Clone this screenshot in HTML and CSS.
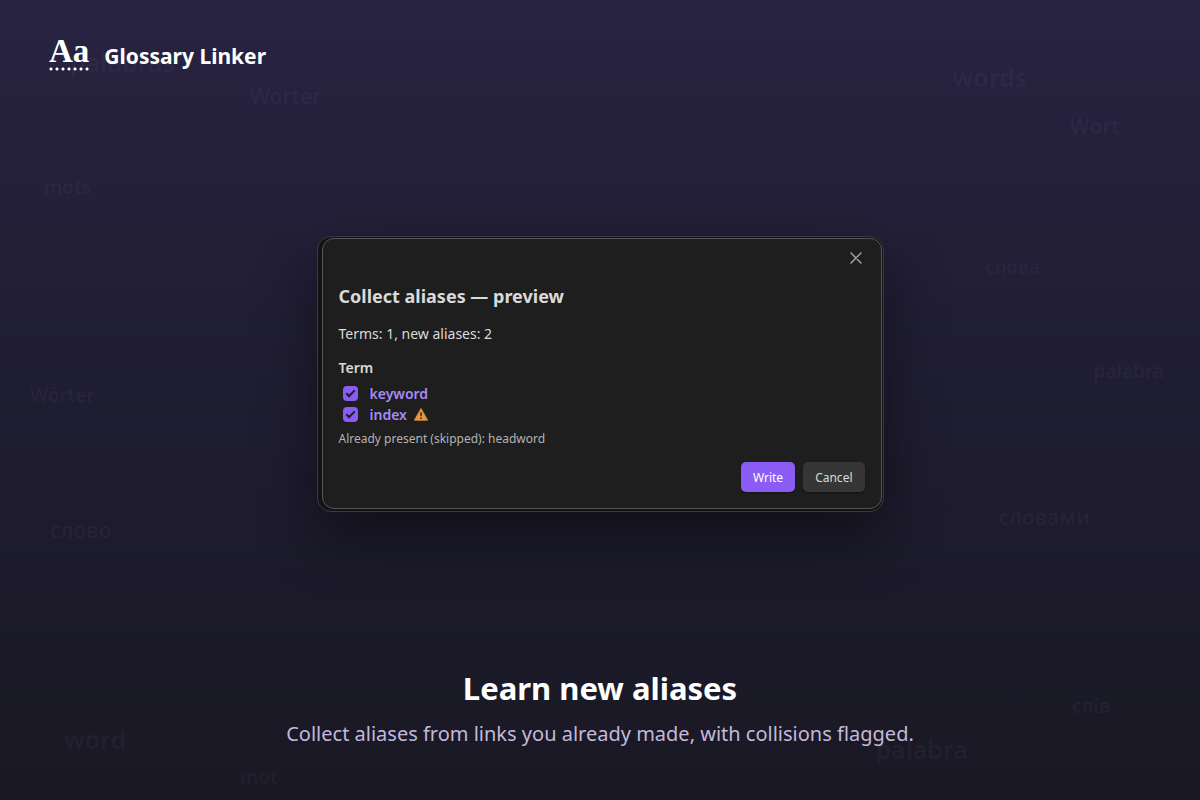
FILE: index.html
```
<!DOCTYPE html>
<html lang="en">
<head>
    <meta charset="UTF-8">
    <meta name="viewport" content="width=device-width, initial-scale=1.0">
    <title>Glossary Linker</title>
    <link rel="stylesheet" href="styles.css">
</head>
<body>
    <div class="words" aria-hidden="true">
        <span class="word large palabras">palabras</span>
        <span class="word worter-top">Wörter</span>
        <span class="word small mots">mots</span>
        <span class="word small worter-left">Wörter</span>
        <span class="word slovo">слово</span>
        <span class="word large word-left">word</span>
        <span class="word small mot">mot</span>
        <span class="word large words-right">words</span>
        <span class="word wort">Wort</span>
        <span class="word small slova">слова</span>
        <span class="word small palabra-right">palabra</span>
        <span class="word slovami">словами</span>
        <span class="word small sliv">слів</span>
        <span class="word large palabra-bottom">palabra</span>
    </div>

    <header class="brand">
        <span class="logo">Aa</span>
        <span class="brand-name">Glossary Linker</span>
    </header>

    <main>
        <div class="frame">
            <form class="modal">
                <button type="button" class="close" aria-label="Close">
                    <svg width="18" height="18" viewBox="0 0 18 18" fill="none" stroke="currentColor" stroke-width="1.4" stroke-linecap="round">
                        <path d="M4 4l10 10M14 4L4 14"/>
                    </svg>
                </button>
                <h2>Collect aliases — preview</h2>
                <p class="summary">Terms: 1, new aliases: 2</p>
                <h3>Term</h3>
                <ul class="terms">
                    <li>
                        <input type="checkbox" id="keyword" checked>
                        <label for="keyword">keyword</label>
                    </li>
                    <li>
                        <input type="checkbox" id="index" checked>
                        <label for="index">index</label>
                        <svg class="warning" width="14" height="13" viewBox="0 0 14 13">
                            <path d="M7 .5L13.6 12.2H.4z" fill="#e9973f" stroke="#e9973f" stroke-width=".8" stroke-linejoin="round"/>
                            <path d="M7 4.2v4M7 9.6v1.3" stroke="#1e1e1e" stroke-width="1.4"/>
                        </svg>
                    </li>
                </ul>
                <p class="skipped">Already present (skipped): headword</p>
                <div class="buttons">
                    <button type="button" class="button primary">Write</button>
                    <button type="button" class="button">Cancel</button>
                </div>
            </form>
        </div>
    </main>

    <footer class="caption">
        <h1>Learn new aliases</h1>
        <p>Collect aliases from links you already made, with collisions flagged.</p>
    </footer>
</body>
</html>
```
FILE: styles.css
```
*, *::before {
    box-sizing: border-box;
}
body {
    margin: 0;
    min-height: 100vh;
    display: flex;
    flex-direction: column;
    position: relative;
    overflow-x: hidden;
    font-family: "Noto Sans", "Open Sans", sans-serif;
    color: #dadada;
    background: linear-gradient(#282341, #1f1d31 50%, #191823);
}
h1, h2, h3, p, ul {
    margin: 0;
    padding: 0;
}

/* Faint words scattered over the background */
.words {
    position: absolute;
    inset: 0;
    z-index: -1;
    overflow: hidden;
}
.word {
    position: absolute;
    font-size: 21px;
    line-height: 28px;
    font-weight: 600;
    color: rgba(160, 140, 220, 0.07);
}
.word.large {
    font-size: 25px;
}
.word.small {
    font-size: 19px;
}
.palabras { left: 70px; top: 48px; }
.worter-top { left: 250px; top: 82px; }
.mots { left: 44px; top: 173px; }
.worter-left { left: 30px; top: 381px; }
.slovo { left: 50px; top: 516px; }
.word-left { left: 64px; top: 725px; }
.mot { left: 240px; top: 763px; }
.words-right { right: 173px; top: 63px; }
.wort { right: 80px; top: 112px; }
.slova { right: 160px; top: 253px; }
.palabra-right { right: 36px; top: 357px; }
.slovami { right: 110px; top: 503px; }
.sliv { right: 90px; top: 692px; }
.palabra-bottom { right: 232px; top: 735px; }

.brand {
    display: flex;
    align-items: center;
    gap: 14px;
    padding: 35px 48px 0;
    color: #fff;
}
.logo {
    padding: 0 1px 4px;
    font-family: "Liberation Serif", serif;
    font-size: 33px;
    line-height: 32px;
    font-weight: bold;
    /* dotted underline */
    background: radial-gradient(circle, #fff 1px, transparent 2px) left bottom / 6px 4px round no-repeat;
    background-repeat: round no-repeat;
}
.brand-name {
    font-size: 21px;
    line-height: 28px;
    font-weight: bold;
    padding-top: 6px;
}

main {
    flex: 1;
    display: flex;
    justify-content: center;
    align-items: center;
    padding: 52px 24px 40px;
}
.frame {
    width: 100%;
    max-width: 567px;
    padding: 1px 1px 2px 4px;
    border: 1px solid #3a3942;
    border-radius: 14px;
    background: #131316;
    box-shadow: 0 24px 60px rgba(0, 0, 0, 0.45);
}
.modal {
    display: flex;
    flex-direction: column;
    padding: 8px 16px 16px;
    border: 1px solid #55555a;
    border-radius: 12px;
    background: #1e1e1e;
}
.close {
    align-self: flex-end;
    display: flex;
    padding: 2px 0;
    border: none;
    background: none;
    color: #a8a8a8;
    cursor: pointer;
}
.modal h2 {
    margin-top: 14px;
    font-size: 18px;
    line-height: 26px;
    font-weight: bold;
}
.summary {
    margin-top: 14px;
    font-size: 14px;
    line-height: 22px;
}
.modal h3 {
    margin-top: 12px;
    font-size: 14px;
    line-height: 22px;
    font-weight: 600;
}
.terms {
    list-style: none;
    margin-top: 4px;
}
.terms li {
    display: flex;
    align-items: center;
    height: 21px;
    padding-left: 4px;
}
.terms input {
    appearance: none;
    width: 15px;
    height: 15px;
    margin: 0 12px 0 0;
    border-radius: 4px;
    background: #8a5cf5;
    display: grid;
    place-items: center;
}
.terms input:checked::before {
    content: "";
    width: 9px;
    height: 5px;
    margin-bottom: 2px;
    border: solid #1e1e1e;
    border-width: 0 0 2px 2px;
    transform: rotate(-45deg);
}
.terms label {
    font-size: 14px;
    font-weight: 600;
    color: #a68af9;
}
.warning {
    margin-left: 7px;
}
.skipped {
    margin-top: 4px;
    font-size: 12px;
    line-height: 20px;
    color: #b3b3b3;
}
.buttons {
    display: flex;
    justify-content: flex-end;
    gap: 8px;
    margin-top: 13px;
}
.button {
    height: 30px;
    padding: 2px 12px 0;
    border: none;
    border-radius: 5px;
    font-family: inherit;
    font-size: 12px;
    color: #dadada;
    background: #363636;
    box-shadow: 0 1px 2px rgba(0, 0, 0, 0.4);
    cursor: pointer;
}
.button.primary {
    color: #fff;
    background: #8a5cf5;
}

.caption {
    padding: 0 24px 52px;
    text-align: center;
}
.caption h1 {
    font-size: 31px;
    line-height: 48px;
    font-weight: bold;
    color: #fff;
}
.caption p {
    margin-top: 8px;
    font-size: 20px;
    line-height: 28px;
    color: #c4b8dc;
}
```
